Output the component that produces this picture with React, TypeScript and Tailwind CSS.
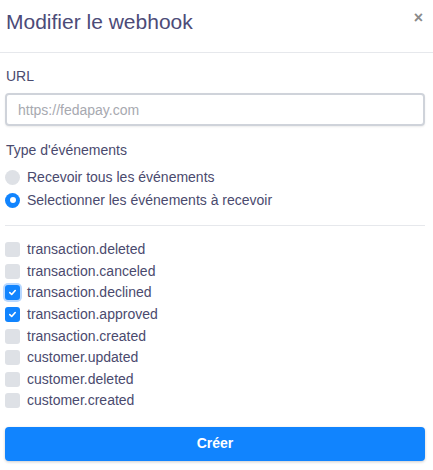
import React from "react";

const events = [
  { name: "transaction.deleted", checked: false },
  { name: "transaction.canceled", checked: false },
  { name: "transaction.declined", checked: true, focus: true },
  { name: "transaction.approved", checked: true },
  { name: "transaction.created", checked: false },
  { name: "customer.updated", checked: false },
  { name: "customer.deleted", checked: false },
  { name: "customer.created", checked: false },
];

function Check() {
  return (
    <svg width="9" height="9" viewBox="0 0 10 10" fill="none">
      <path d="M2 5.2 L4.1 7.2 L8 2.8" stroke="white" strokeWidth="1.8" strokeLinecap="round" strokeLinejoin="round" />
    </svg>
  );
}

export default function App() {
  return (
    <div className="w-[433px] h-[470px] bg-white text-[#4a4a6e]" style={{ fontFamily: '"Liberation Sans", Arial, sans-serif' }}>
      <div className="h-[53px] border-b border-[#e6e8ec] flex items-start justify-between pl-[6px] pr-[10px]">
        <h1 className="mt-[8px] text-[21px] leading-[28px] text-[#4c4b78]">Modifier le webhook</h1>
        <span className="mt-[8px] text-[#8a8a8a] text-[16px] leading-[20px] font-bold">×</span>
      </div>
      <div className="pl-[5px] pr-[8px]">
        <div className="mt-[13px] text-[14px] leading-[20px] pl-[1px]">URL</div>
        <input
          className="mt-[7px] w-full h-[33px] border-2 border-[#cfd3da] rounded-[4px] px-[11px] text-[14px] outline-none placeholder:text-[#a7a9b0] shadow-[0_1px_2px_rgba(0,0,0,0.08)]"
          placeholder="https://fedapay.com"
        />
        <div className="mt-[14px] text-[14px] leading-[20px] pl-[1px]">Type d'événements</div>
        <div className="mt-[5.5px]">
          <div className="h-[23px] flex items-center gap-[7px]">
            <span className="w-[15px] h-[15px] rounded-full bg-[#dee1e6]" />
            <span className="text-[14px]">Recevoir tous les événements</span>
          </div>
          <div className="h-[23px] flex items-center gap-[7px]">
            <span className="w-[15px] h-[15px] rounded-full bg-[#1184fe] flex items-center justify-center">
              <span className="w-[6px] h-[6px] rounded-full bg-white" />
            </span>
            <span className="text-[14px]">Selectionner les événements à recevoir</span>
          </div>
        </div>
        <div className="mt-[13.5px] border-t border-[#e6e8ec]" />
        <div className="mt-[13px]">
          {events.map((e) => (
            <div key={e.name} className="h-[21.57px] flex items-center gap-[7px]">
              <span
                className={
                  "w-[15px] h-[15px] rounded-[3px] flex items-center justify-center " +
                  (e.checked ? "bg-[#1184fe] " : "bg-[#dee1e6] ") +
                  (e.focus ? "ring-2 ring-[#b8d8ff]" : "")
                }
              >
                {e.checked && <Check />}
              </span>
              <span className="text-[14px]">{e.name}</span>
            </div>
          ))}
        </div>
        <button className="mt-[15px] w-full h-[34px] rounded-[4px] bg-[#1184fe] text-white text-[14px] font-bold shadow-[0_1px_3px_rgba(0,0,0,0.2)]">
          Créer
        </button>
      </div>
    </div>
  );
}
